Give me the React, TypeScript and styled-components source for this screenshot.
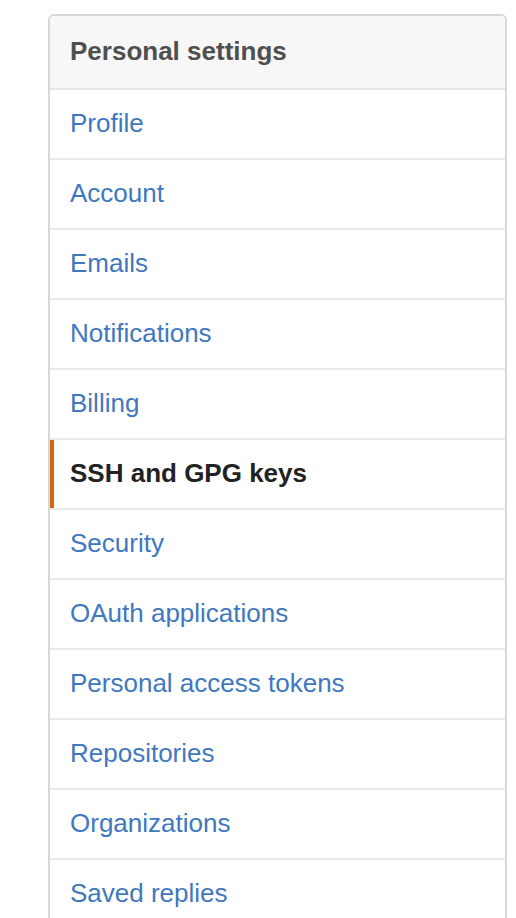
import React from "react";
import styled, { createGlobalStyle } from "styled-components";

const GlobalStyle = createGlobalStyle`
  html, body {
    margin: 0;
    padding: 0;
    background: #ffffff;
    overflow: hidden;
  }
  body {
    font-family: "Liberation Sans", Arial, Helvetica, sans-serif;
    -webkit-font-smoothing: antialiased;
  }
`;

const Page = styled.div`
  padding: 14px 0 0 48px;
`;

const Menu = styled.nav`
  width: 459px;
  box-sizing: border-box;
  border: 2px solid #d8d8d8;
  border-radius: 6px;
  background: #ffffff;
  overflow: hidden;
`;

const Heading = styled.h3`
  margin: 0;
  height: 74px;
  box-sizing: border-box;
  display: flex;
  align-items: center;
  padding: 0 20px 2px;
  background: #f7f7f7;
  border-bottom: 2px solid #e5e5e5;
  color: #4f4f4f;
  font-size: 26px;
  font-weight: bold;
  line-height: 1;
`;

const Item = styled.a<{ $selected?: boolean }>`
  position: relative;
  display: flex;
  align-items: center;
  height: 68px;
  box-sizing: content-box;
  padding: 0 20px;
  border-bottom: 2px solid #eaeaea;
  font-size: 26px;
  line-height: 1;
  text-decoration: none;
  color: ${(p) => (p.$selected ? "#222222" : "#4078c0")};
  font-weight: ${(p) => (p.$selected ? "bold" : "normal")};
  cursor: pointer;

  & > span {
    position: relative;
    top: -1px;
  }

  &::before {
    content: "";
    position: absolute;
    left: 0;
    top: 0;
    bottom: 0;
    width: 4px;
    background: ${(p) => (p.$selected ? "#d26911" : "transparent")};
  }
`;

const items = [
  "Profile",
  "Account",
  "Emails",
  "Notifications",
  "Billing",
  "SSH and GPG keys",
  "Security",
  "OAuth applications",
  "Personal access tokens",
  "Repositories",
  "Organizations",
  "Saved replies",
];

export default function App() {
  return (
    <>
      <GlobalStyle />
      <Page>
        <Menu>
          <Heading>Personal settings</Heading>
          {items.map((label) => (
            <Item key={label} $selected={label === "SSH and GPG keys"}>
              <span>{label}</span>
            </Item>
          ))}
        </Menu>
      </Page>
    </>
  );
}
